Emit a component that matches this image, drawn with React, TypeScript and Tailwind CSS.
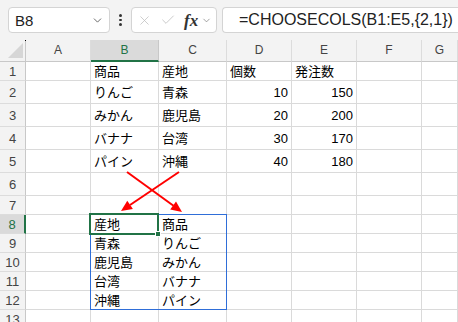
import { ChevronDown, X, Check } from "lucide-react";

type Cell = string | number | null;
type Row = { n: number; tall: boolean; cells: Cell[] };

const columns = ["A", "B", "C", "D", "E", "F", "G"];

const rows: Row[] = [
  { n: 1, tall: false, cells: [null, "商品", "産地", "個数", "発注数", null, null] },
  { n: 2, tall: true, cells: [null, "りんご", "青森", 10, 150, null, null] },
  { n: 3, tall: true, cells: [null, "みかん", "鹿児島", 20, 200, null, null] },
  { n: 4, tall: true, cells: [null, "バナナ", "台湾", 30, 170, null, null] },
  { n: 5, tall: true, cells: [null, "パイン", "沖縄", 40, 180, null, null] },
  { n: 6, tall: true, cells: [null, null, null, null, null, null, null] },
  { n: 7, tall: false, cells: [null, null, null, null, null, null, null] },
  { n: 8, tall: false, cells: [null, "産地", "商品", null, null, null, null] },
  { n: 9, tall: false, cells: [null, "青森", "りんご", null, null, null, null] },
  { n: 10, tall: false, cells: [null, "鹿児島", "みかん", null, null, null, null] },
  { n: 11, tall: false, cells: [null, "台湾", "バナナ", null, null, null, null] },
  { n: 12, tall: false, cells: [null, "沖縄", "パイン", null, null, null, null] },
  { n: 13, tall: false, cells: [null, null, null, null, null, null, null] },
];

// column widths include the 1px right gridline
const gridCols = "grid grid-rows-1 grid-cols-[26px_65px_68px_68px_65px_65px_65px_1fr]";

function FormulaBar() {
  return (
    <div className="flex h-[40px] items-start bg-[#f3f3f3] pt-[7px] pl-[8px]">
      {/* name box */}
      <div className="flex h-[26px] w-[102px] items-center justify-between rounded-[4px] border border-[#d4d4d4] bg-white pl-[6px] pr-[5px]">
        <span className="text-[15px] leading-none text-[#222]">B8</span>
        <ChevronDown size={13} strokeWidth={1.6} className="text-[#555]" />
      </div>
      <div className="flex h-[26px] w-[21px] flex-col items-center justify-center gap-[2px]">
        <span className="h-[2.5px] w-[2.5px] rounded-full bg-[#333]" />
        <span className="h-[2.5px] w-[2.5px] rounded-full bg-[#333]" />
        <span className="h-[2.5px] w-[2.5px] rounded-full bg-[#333]" />
      </div>
      {/* cancel / enter / fx */}
      <div className="flex h-[26px] w-[86px] items-center rounded-[4px] border border-[#d4d4d4] bg-white pl-[5px]">
        <X size={15} strokeWidth={1.2} className="text-[#bdbdbd]" />
        <Check size={16} strokeWidth={1.2} className="ml-[8px] text-[#bdbdbd]" />
        <span className="ml-[8px] font-['Liberation_Serif',serif] text-[17px] font-bold italic leading-none text-[#333]">
          fx
        </span>
        <ChevronDown size={11} strokeWidth={1.5} className="ml-[3px] text-[#777]" />
      </div>
      <div className="ml-[5px] flex h-[26px] flex-1 items-center rounded-l-[4px] border border-r-0 border-[#d4d4d4] bg-white pl-[16px]">
        <span className="text-[16px] leading-none text-[#222]">=CHOOSECOLS(B1:E5,{"{"}2,1{"}"})</span>
      </div>
    </div>
  );
}

function HeaderRow() {
  return (
    <div className={`${gridCols} h-[22px] leading-[14px]`}>
      <div className="relative border-r border-b border-[#c8c8c8] bg-[#f3f3f3]">
        <svg className="absolute left-[8px] top-[3px]" width="15" height="15" viewBox="0 0 15 15">
          <polygon points="15,0 15,15 0,15" fill="#d6d6d6" />
        </svg>
      </div>
      {columns.map((c) =>
        c === "B" ? (
          <div
            key={c}
            className="flex items-center justify-center border-r border-b-2 border-r-[#c8c8c8] border-b-[#217346] bg-[#dadada] pb-[1px] text-[12px] text-[#217346]"
          >
            {c}
          </div>
        ) : (
          <div
            key={c}
            className="flex items-center justify-center border-r border-b border-r-[#dcdcdc] border-b-[#c8c8c8] bg-[#f3f3f3] pb-[2px] text-[12px] text-[#444]"
          >
            {c}
          </div>
        )
      )}
    </div>
  );
}

function SheetRow({ row }: { row: Row }) {
  const active = row.n === 8;
  return (
    <div className={`${gridCols} ${row.tall ? "h-[23px]" : "h-[19px]"} leading-[15px]`}>
      {active ? (
        <div className="flex items-center justify-center border-r-2 border-b border-r-[#217346] border-b-[#dcdcdc] bg-[#dadada] text-[13px] text-[#217346]">
          {row.n}
        </div>
      ) : (
        <div className="flex items-center justify-center border-r border-b border-r-[#c8c8c8] border-b-[#dcdcdc] bg-[#f3f3f3] text-[13px] text-[#444]">
          {row.n}
        </div>
      )}
      {row.cells.map((v, i) =>
        typeof v === "number" ? (
          <div
            key={i}
            className="flex items-center justify-end border-r border-b border-[#dadada] bg-white pt-[1px] pr-[3px] text-[13px] text-black"
          >
            {v}
          </div>
        ) : (
          <div
            key={i}
            className="flex items-center border-r border-b border-[#dadada] bg-white pt-[1px] pl-[3px] text-[13px] text-black"
          >
            {v}
          </div>
        )
      )}
    </div>
  );
}

function Arrows() {
  return (
    <svg className="pointer-events-none absolute left-0 top-0" width="458" height="322">
      <line x1="127" y1="172" x2="173.5" y2="205.8" stroke="#ff0000" strokeWidth="2" />
      <polygon points="182,212 170.2,209.5 176,201.5" fill="#ff0000" />
      <line x1="179" y1="172" x2="130" y2="205" stroke="#ff0000" strokeWidth="2" />
      <polygon points="121,211 127.3,200.7 132.9,209.1" fill="#ff0000" />
    </svg>
  );
}

export default function App() {
  return (
    <div className="relative h-[322px] w-[458px] overflow-hidden bg-white font-['Liberation_Sans','Noto_Sans_CJK_JP',sans-serif]">
      <FormulaBar />
      <HeaderRow />
      {rows.map((r) => (
        <SheetRow key={r.n} row={r} />
      ))}

      {/* spill range */}
      <div className="absolute left-[90px] top-[214px] h-[96px] w-[137px] border border-[#2f6ed8]" />
      {/* active cell */}
      <div className="absolute left-[89px] top-[213px] h-[22px] w-[70px] border-2 border-[#217346]" />
      <div className="absolute left-[155px] top-[231px] h-[6px] w-[6px] border border-white bg-[#217346]" />
      <span className="absolute left-[25px] top-[40px] h-[1px] w-[1px] bg-black" />

      <Arrows />
    </div>
  );
}
